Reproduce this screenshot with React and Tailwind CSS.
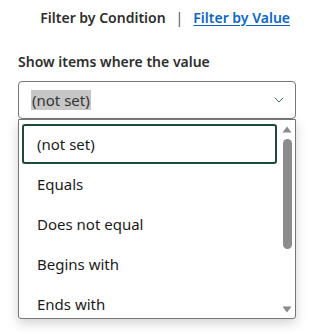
import { ChevronDown } from "lucide-react";

const OPTIONS = ["(not set)", "Equals", "Does not equal", "Begins with", "Ends with"];

export default function App() {
  return (
    <div className="w-[310px] h-[334px] bg-white overflow-hidden text-[#2e2e2e]" style={{ fontFamily: "'Noto Sans', sans-serif" }}>
      <div className="flex justify-end items-center pt-[5px] pr-[20px] text-[14px] font-semibold h-[24px] box-content">
        <span>Filter by Condition</span>
        <span className="mx-[10px] font-normal text-[#555]">|</span>
        <a href="#" className="text-[#0b67c7] underline underline-offset-2">Filter by Value</a>
      </div>

      <div className="pl-[18px] pr-[14px] pt-[21px]">
        <div className="text-[14px] font-semibold h-[24px] leading-[24px]">Show items where the value</div>
        <div className="mt-[7px] h-[38px] border border-[#777] rounded-[4px] flex items-center pl-[12px] pr-[8px]">
          <span className="bg-[#c6c6c6] text-[#333] text-[15px] leading-[20px] px-px">(not set)</span>
          <ChevronDown size={16} strokeWidth={1.5} className="ml-auto text-[#4a6b5e]" />
        </div>

        <div className="h-[200px] border border-[#767676] rounded-b-[3px] shadow-[0_4px_12px_rgba(0,0,0,0.18)] flex bg-white">
          <div className="flex-1 pt-[4px] pl-[3px] pr-[5px]">
            {OPTIONS.map((o, i) => (
              <div
                key={o}
                className={
                  "h-[40px] flex items-center pl-[13px] text-[15px] text-[#1a1a1a] rounded-[3px] " +
                  (i === 0 ? "border-2 border-[#1d4a36]" : "border-2 border-transparent")
                }
              >
                {o}
              </div>
            ))}
          </div>
          <div className="w-[10px] mr-[3px] flex flex-col items-center pt-[6px] pb-[5px]">
            <svg width="10" height="7" viewBox="0 0 10 7"><path d="M5 0.5 L9.5 6.5 L0.5 6.5 Z" fill="#8a8a8a" /></svg>
            <div className="w-[9px] h-[110px] mt-[6px] rounded-full bg-[#8c8c8c]" />
            <svg width="10" height="7" viewBox="0 0 10 7" className="mt-auto"><path d="M0.5 0.5 L9.5 0.5 L5 6.5 Z" fill="#8a8a8a" /></svg>
          </div>
        </div>
      </div>
    </div>
  );
}
